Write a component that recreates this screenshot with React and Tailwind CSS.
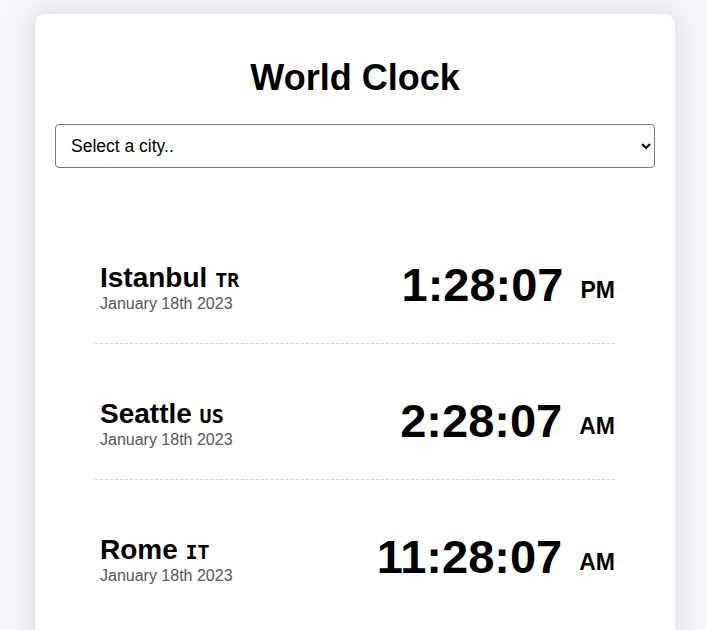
import React from 'react';

const cities = [
  { name: 'Istanbul', code: 'TR', date: 'January 18th 2023', time: '1:28:07', ampm: 'PM' },
  { name: 'Seattle', code: 'US', date: 'January 18th 2023', time: '2:28:07', ampm: 'AM' },
  { name: 'Rome', code: 'IT', date: 'January 18th 2023', time: '11:28:07', ampm: 'AM' },
];

function CityRow({ city, last }) {
  return (
    <div
      className={
        last
          ? 'flex items-center justify-between pl-[5px] pt-[56px] pb-[29px]'
          : 'flex items-center justify-between pl-[5px] pt-[56px] pb-[29px] border-b border-dashed border-[#cccccc]'
      }
    >
      <div>
        <div className="h-[28px] text-[28px] leading-[28px] font-bold text-black whitespace-nowrap">
          {city.name}{' '}
          <span className="text-[20px] leading-none font-['DejaVu_Sans_Mono',monospace]">{city.code}</span>
        </div>
        <div className="mt-[2px] h-[20px] text-[16px] leading-[20px] text-[#555555]">{city.date}</div>
      </div>
      <div className="flex items-baseline gap-[17px] h-[47px] -mt-[10px]">
        <span className="text-[47px] leading-none font-bold">{city.time}</span>
        <span className="relative bottom-[3px] text-[23px] leading-none font-bold">{city.ampm}</span>
      </div>
    </div>
  );
}

export default function App() {
  return (
    <div className="min-h-screen bg-[#f5f5fa] pt-[14px] pl-[35px] font-['Liberation_Sans',Arial,sans-serif] text-black">
      <div className="w-[640px] bg-white rounded-[10px] shadow-[0_0_24px_rgba(190,190,215,0.5)] px-5 pt-[46px] pb-10">
        <h1 className="text-center text-[36px] leading-none font-bold">World Clock</h1>
        <select className="mt-[28px] w-full h-[44px] border border-[#767676] rounded-[4px] pl-[11px] pr-[10px] text-[17.5px] bg-white text-black">
          <option>Select a city..</option>
          <option>Istanbul</option>
          <option>Seattle</option>
          <option>Rome</option>
        </select>
        <div className="mt-[40px] mx-10">
          {cities.map((c, i) => (
            <CityRow key={c.name} city={c} last={i === cities.length - 1} />
          ))}
        </div>
      </div>
    </div>
  );
}
